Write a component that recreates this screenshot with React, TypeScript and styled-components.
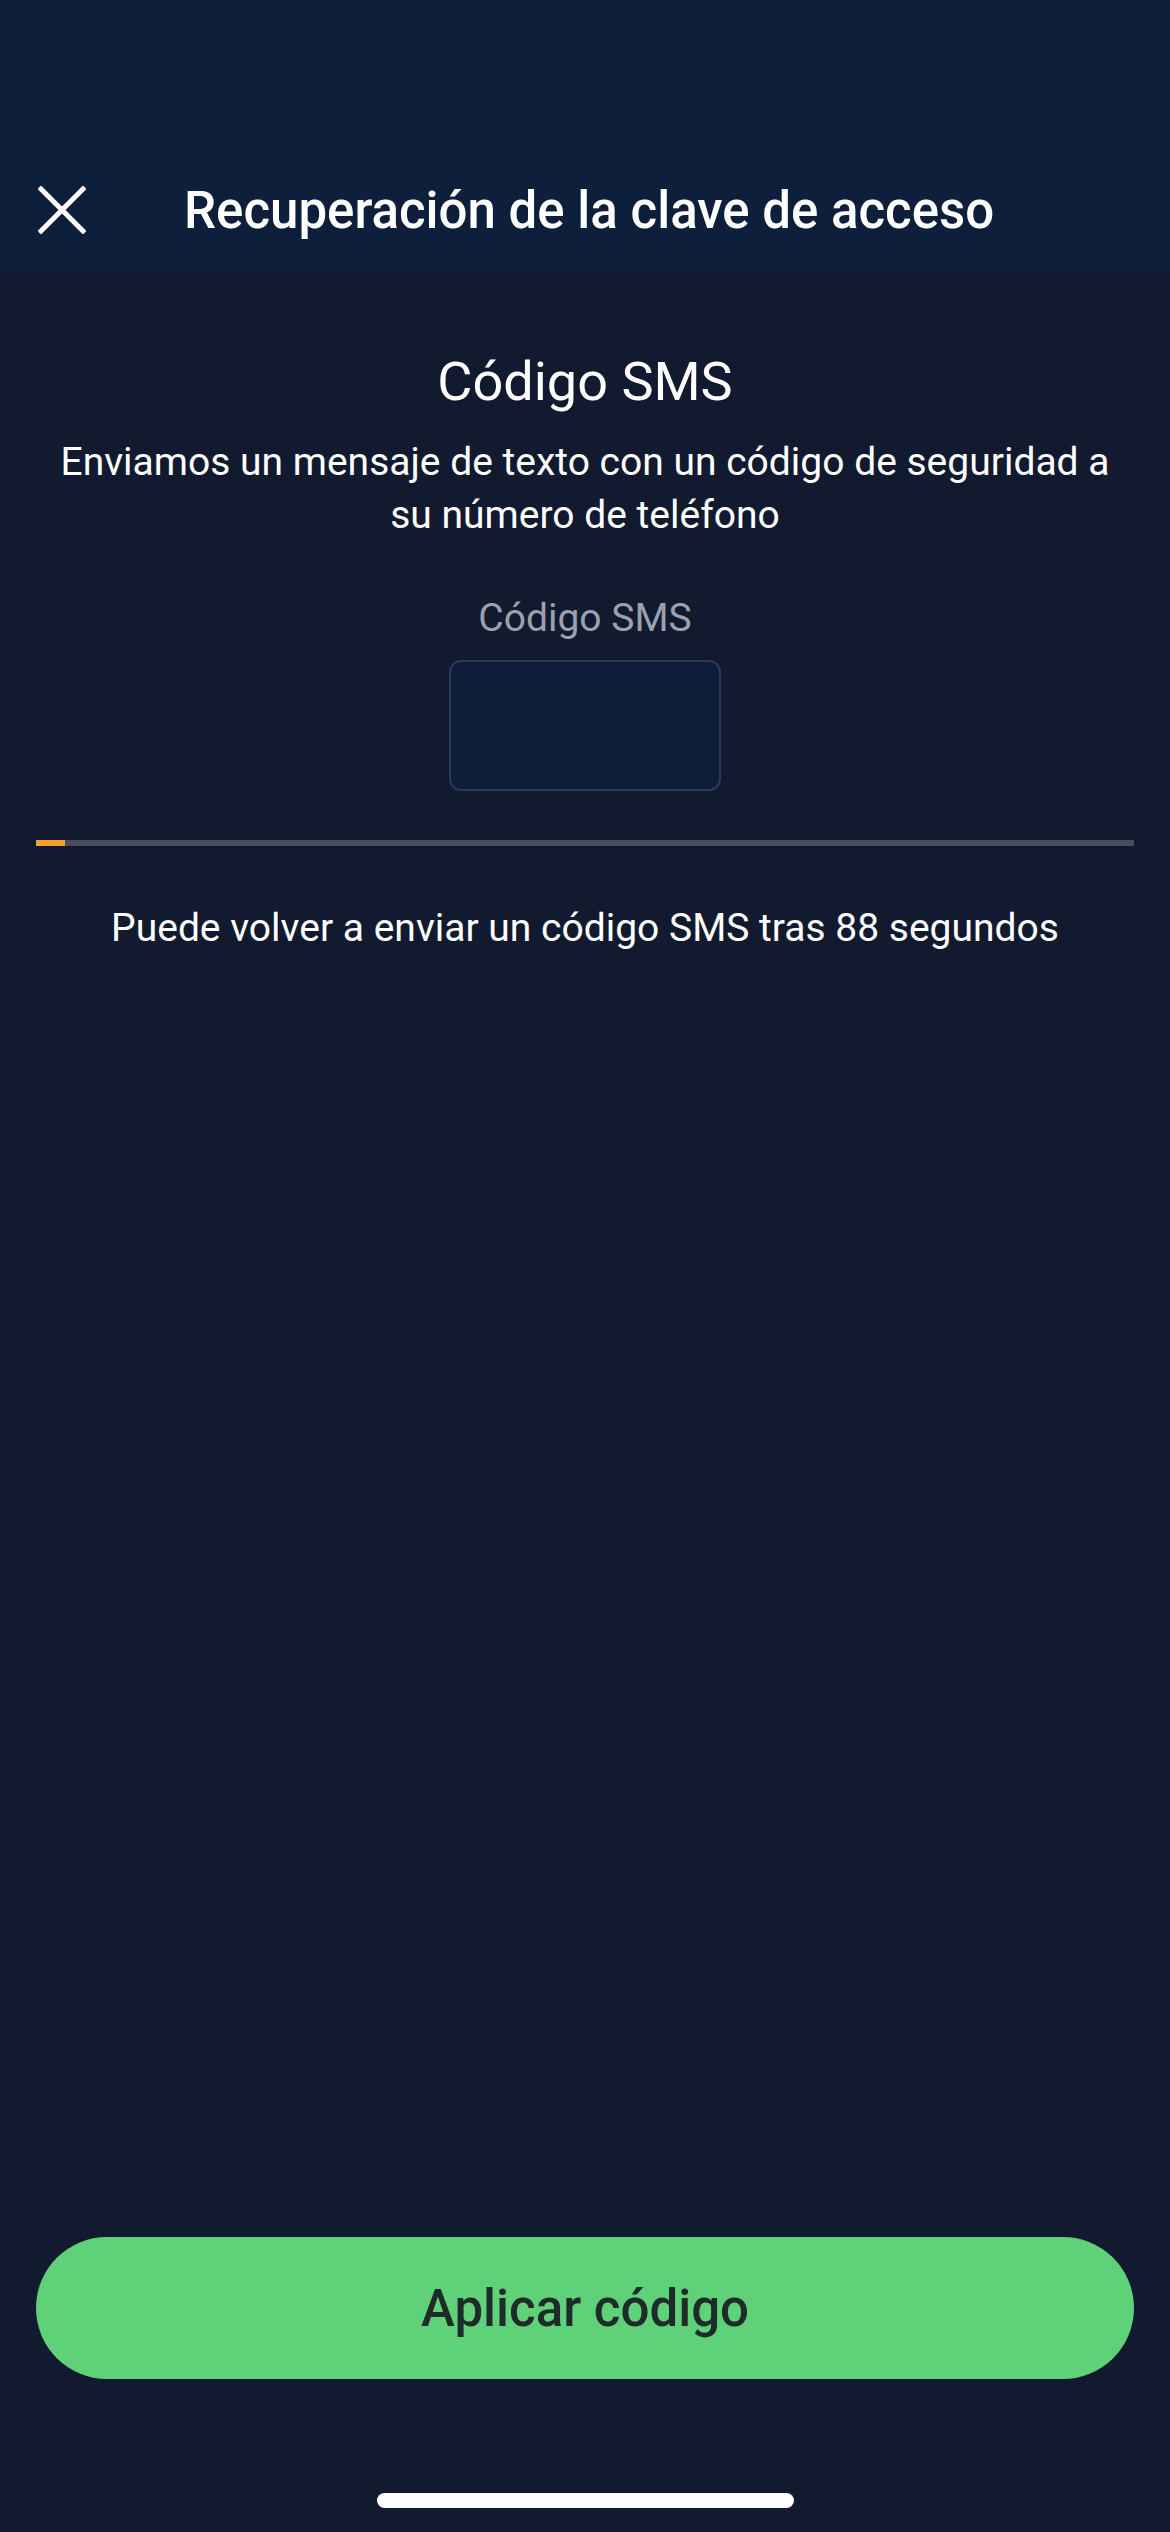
import React from "react";
import styled, { createGlobalStyle } from "styled-components";

const Global = createGlobalStyle`
  html, body { margin: 0; padding: 0; background: #121a2f; }
  body { font-family: Roboto, "Noto Sans", "Liberation Sans", sans-serif; -webkit-font-smoothing: antialiased; }
  * { box-sizing: border-box; }
`;

const Screen = styled.div`
  width: 1170px;
  min-height: 2532px;
  display: flex;
  flex-direction: column;
  background: #121a2f;
  color: #ffffff;
`;

const Header = styled.header`
  height: 272px;
  padding-top: 150px;
  background: #0e1f3b;
  display: flex;
  align-items: center;
  padding-left: 38px;
  padding-right: 36px;
`;

const CloseButton = styled.button`
  width: 48px;
  height: 48px;
  padding: 0;
  border: none;
  background: transparent;
  display: flex;
  align-items: center;
  justify-content: center;
  margin-top: -2px;
`;

const HeaderTitle = styled.h1`
  flex: 1;
  margin: 0 0 0 98px;
  font-size: 51px;
  font-weight: 500;
  line-height: 60px;
  color: #ffffff;
  white-space: nowrap;
`;

const Content = styled.main`
  flex: 1;
  display: flex;
  flex-direction: column;
  align-items: center;
  padding: 0 36px;
`;

const Heading = styled.h2`
  margin: 78px 0 0;
  font-size: 54px;
  font-weight: 400;
  line-height: 64px;
  text-align: center;
`;

const Description = styled.p`
  margin: 22px 0 0;
  font-size: 39px;
  line-height: 53px;
  text-align: center;
  color: #ffffff;
  white-space: nowrap;
`;

const FieldLabel = styled.label`
  margin-top: 54px;
  font-size: 39px;
  line-height: 44px;
  color: #9ba1ad;
`;

const CodeInput = styled.div`
  margin-top: 20px;
  width: 272px;
  height: 131px;
  border-radius: 12px;
  background: #0e1e3a;
  border: 2px solid #2c3a55;
`;

const Progress = styled.div`
  margin-top: 49px;
  align-self: stretch;
  height: 6px;
  background: #4a4d58;
`;

const ProgressFill = styled.div`
  height: 100%;
  background: #f5a033;
`;

const ResendText = styled.p`
  margin: 60px 0 0;
  font-size: 39px;
  line-height: 44px;
  text-align: center;
  white-space: nowrap;
`;

const Spacer = styled.div`
  flex: 1;
`;

const ApplyButton = styled.button`
  align-self: stretch;
  height: 142px;
  border: none;
  border-radius: 71px;
  background: #5fd178;
  color: #1f2a2a;
  font-family: Roboto, "Noto Sans", sans-serif;
  font-size: 51px;
  font-weight: 500;
`;

const HomeIndicator = styled.div`
  margin: 114px 0 24px;
  width: 417px;
  height: 15px;
  border-radius: 8px;
  background: #ffffff;
`;

export default function App() {
  const progress = 29 / 1097;
  return (
    <>
      <Global />
      <Screen>
        <Header>
          <CloseButton aria-label="Cerrar">
            <svg width="48" height="48" viewBox="0 0 48 48">
              <path d="M3 3 L45 45 M45 3 L3 45" stroke="#ffffff" strokeWidth="5" strokeLinecap="square" />
            </svg>
          </CloseButton>
          <HeaderTitle>Recuperación de la clave de acceso</HeaderTitle>
        </Header>
        <Content>
          <Heading>Código SMS</Heading>
          <Description>
            Enviamos un mensaje de texto con un código de seguridad a
            <br />
            su número de teléfono
          </Description>
          <FieldLabel>Código SMS</FieldLabel>
          <CodeInput />
          <Progress>
            <ProgressFill style={{ width: `${progress * 100}%` }} />
          </Progress>
          <ResendText>Puede volver a enviar un código SMS tras 88 segundos</ResendText>
          <Spacer />
          <ApplyButton>Aplicar código</ApplyButton>
          <HomeIndicator />
        </Content>
      </Screen>
    </>
  );
}
